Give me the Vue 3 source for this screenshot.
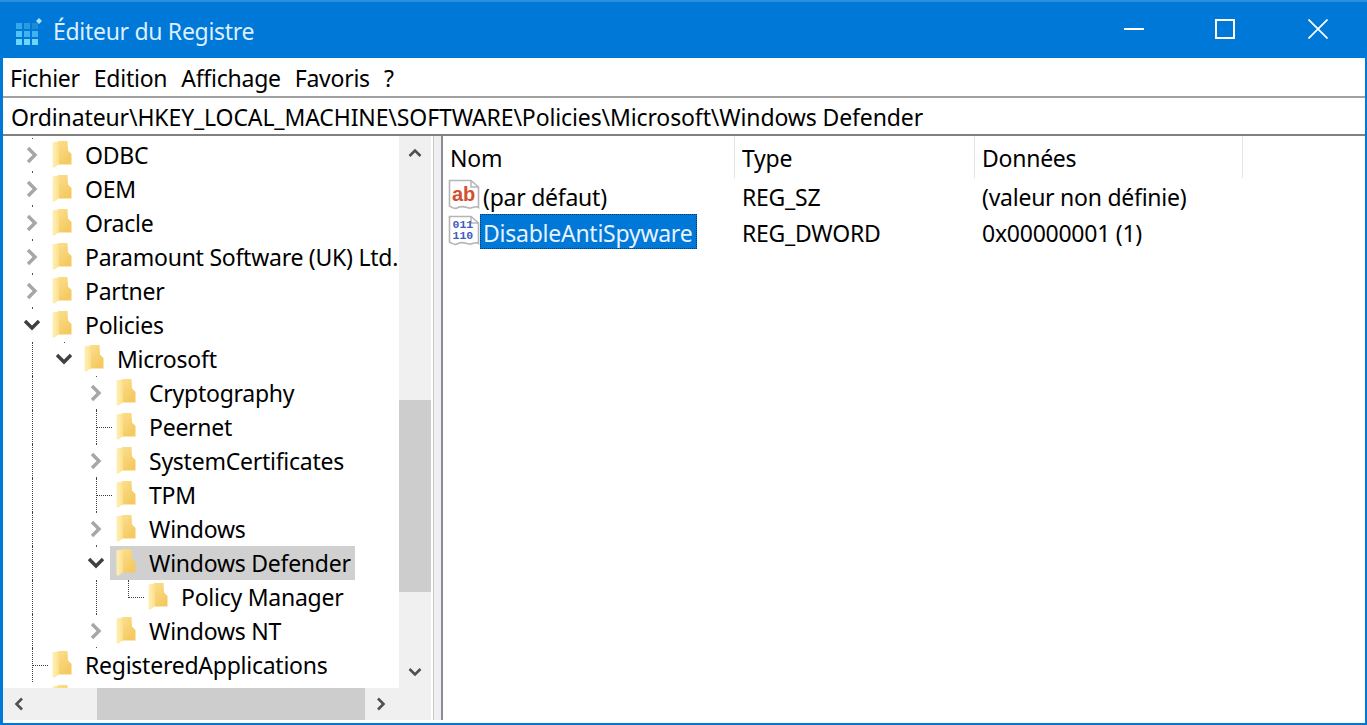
<template>
  <div class="window">
    <header class="titlebar">
      <svg class="app-icon" width="26" height="28" viewBox="0 0 26 28">
        <g fill="#4fc3f7">
          <rect x="0" y="5" width="6" height="6" fill="#35a9e8" />
          <rect x="8" y="5" width="6" height="6" fill="#2a9be0" />
          <rect x="16" y="5" width="6" height="6" fill="#1e8bd8" />
          <rect x="0" y="13" width="6" height="6" />
          <rect x="8" y="13" width="6" height="6" fill="#3db4ee" />
          <rect x="16" y="13" width="6" height="6" fill="#3db4ee" />
          <rect x="0" y="21" width="6" height="6" fill="#6fd6fb" />
          <rect x="8" y="21" width="6" height="6" fill="#6fd6fb" />
          <rect x="16" y="21" width="6" height="6" fill="#6fd6fb" />
        </g>
        <path d="M23 0 L26 3 L23 6 L20 3 Z" fill="#a6e3f9" />
      </svg>
      <span class="title">Éditeur du Registre</span>
      <div class="controls">
        <svg width="20" height="20" viewBox="0 0 20 20"><path d="M0 10H20" stroke="#fff" stroke-width="2" /></svg>
        <svg class="max" width="20" height="20" viewBox="0 0 20 20"><path d="M1 1H19V19H1Z" fill="none" stroke="#fff" stroke-width="2" /></svg>
        <svg width="20" height="20" viewBox="0 0 20 20"><path d="M0.5 0.5L19.5 19.5M19.5 0.5L0.5 19.5" stroke="#fff" stroke-width="1.7" /></svg>
      </div>
    </header>

    <div class="body">
      <nav class="menubar">
        <span v-for="m in menus" :key="m">{{ m }}</span>
      </nav>
      <div class="address">Ordinateur\HKEY_LOCAL_MACHINE\SOFTWARE\Policies\Microsoft\Windows Defender</div>

      <div class="panes">
        <section class="tree-pane">
          <div class="tree-main">
            <ul class="tree">
              <li v-for="(row, r) in rows" :key="r" class="row">
                <span v-for="(c, i) in row.cells" :key="i" class="cell" :class="c">
                  <svg v-if="c === 'closed'" width="12" height="18" viewBox="0 0 12 18"><path d="M2 2L9 9L2 16" fill="none" stroke="#a6a6a6" stroke-width="3.4" /></svg>
                  <svg v-if="c === 'open'" width="18" height="12" viewBox="0 0 18 12"><path d="M2 2L9 9L16 2" fill="none" stroke="#404040" stroke-width="3.4" /></svg>
                </span>
                <span class="item" :class="{ selected: row.selected }">
                  <svg class="folder" width="20" height="28" viewBox="0 0 20 28">
                    <defs>
                      <linearGradient id="fold" x1="0" y1="0" x2="0.6" y2="1">
                        <stop offset="0" stop-color="#fbdf8c" />
                        <stop offset="1" stop-color="#f5c860" />
                      </linearGradient>
                      <linearGradient id="leaf" x1="0" y1="0" x2="1" y2="0">
                        <stop offset="0" stop-color="#fff0b8" />
                        <stop offset="1" stop-color="#fbe08c" />
                      </linearGradient>
                    </defs>
                    <path d="M6 0H15.500L16 9.500L19.500 13V23.500H6Z" fill="url(#fold)" />
                    <path d="M0.500 1.500L7 0.500V23L2 27L0.500 25.500Z" fill="url(#leaf)" />
                  </svg>
                  <span class="label">{{ row.name }}</span>
                </span>
              </li>
            </ul>
            <div class="vscroll">
              <button class="arrow">
                <svg width="14" height="10" viewBox="0 0 14 10"><path d="M1.500 8L7 2.500L12.500 8" fill="none" stroke="#505050" stroke-width="2.600" /></svg>
              </button>
              <div class="vtrack"><div class="vthumb"></div></div>
              <button class="arrow">
                <svg width="14" height="10" viewBox="0 0 14 10"><path d="M1.500 2L7 7.500L12.500 2" fill="none" stroke="#505050" stroke-width="2.600" /></svg>
              </button>
            </div>
          </div>
          <div class="hscroll">
            <button class="arrow wide">
              <svg width="10" height="14" viewBox="0 0 10 14"><path d="M8 1.500L2.500 7L8 12.500" fill="none" stroke="#505050" stroke-width="2.600" /></svg>
            </button>
            <div class="hthumb"></div>
            <button class="arrow wide">
              <svg width="10" height="14" viewBox="0 0 10 14"><path d="M2 1.500L7.500 7L2 12.500" fill="none" stroke="#505050" stroke-width="2.600" /></svg>
            </button>
          </div>
        </section>

        <div class="splitter"></div>

        <section class="list-pane">
          <div class="list-head">
            <span class="col col-name">Nom</span>
            <span class="col col-type">Type</span>
            <span class="col col-data">Données</span>
          </div>
          <div class="list-row">
            <span class="col-name name-cell">
              <svg class="reg-icon" width="32" height="32" viewBox="0 0 32 32">
                <path d="M1.500 1.500H23L30.500 8V28.500C27 26 25 30 21 29C17 28 13 26 9 29C6 30.500 4 28 1.500 27Z" fill="#fff" stroke="#b5b5b5" stroke-width="1.600" />
                <path d="M23 1.500V8H30.500" fill="none" stroke="#b5b5b5" stroke-width="1.500" />
                <text x="4" y="22" class="ab">ab</text>
              </svg>
              <span class="value">(par défaut)</span>
            </span>
            <span class="col col-type">REG_SZ</span>
            <span class="col col-data">(valeur non définie)</span>
          </div>
          <div class="list-row">
            <span class="col-name name-cell">
              <svg class="reg-icon" width="32" height="32" viewBox="0 0 32 32">
                <path d="M1.500 1.500H23L30.500 8V28.500C27 26 25 30 21 29C17 28 13 26 9 29C6 30.500 4 28 1.500 27Z" fill="#fff" stroke="#b5b5b5" stroke-width="1.600" />
                <path d="M23 1.500V8H30.500" fill="none" stroke="#b5b5b5" stroke-width="1.500" />
                <text x="4.500" y="13" class="bin">011</text>
                <text x="4.500" y="24" class="bin">110</text>
              </svg>
              <span class="value active">DisableAntiSpyware</span>
            </span>
            <span class="col col-type">REG_DWORD</span>
            <span class="col col-data">0x00000001 (1)</span>
          </div>
        </section>
      </div>
    </div>
  </div>
</template>

<script setup>
const menus = ["Fichier", "Edition", "Affichage", "Favoris", "?"];

const rows = [
  { name: "ODBC", cells: ["closed"] },
  { name: "OEM", cells: ["closed"] },
  { name: "Oracle", cells: ["closed"] },
  { name: "Paramount Software (UK) Ltd.", cells: ["closed"] },
  { name: "Partner", cells: ["closed"] },
  { name: "Policies", cells: ["open"] },
  { name: "Microsoft", cells: ["pass", "open"] },
  { name: "Cryptography", cells: ["pass", "", "closed"] },
  { name: "Peernet", cells: ["pass", "", "tee"] },
  { name: "SystemCertificates", cells: ["pass", "", "closed"] },
  { name: "TPM", cells: ["pass", "", "tee"] },
  { name: "Windows", cells: ["pass", "", "closed"] },
  { name: "Windows Defender", cells: ["pass", "", "open"], selected: true },
  { name: "Policy Manager", cells: ["pass", "", "pass", "end"] },
  { name: "Windows NT", cells: ["pass", "", "closed"] },
  { name: "RegisteredApplications", cells: ["tee"] },
  { name: "", cells: [""] },
];
</script>

<style>
html,
body {
  margin: 0;
  overflow: hidden;
}
</style>

<style scoped>
.window {
  box-sizing: border-box;
  width: 1367px;
  height: 725px;
  background: #0078d7;
  border-top: 2px solid #2b8fdf;
  padding: 0 2px 2px 3px;
  display: flex;
  flex-direction: column;
  font-family: "Noto Sans", sans-serif;
  font-size: 23px;
  letter-spacing: -0.25px;
  color: #000;
}

.titlebar {
  height: 56px;
  flex: none;
  display: flex;
  align-items: center;
  color: #dcefff;
}

.app-icon {
  margin-left: 13px;
  margin-right: 11px;
  margin-top: 3px;
}

.title {
  font-size: 23px;
  letter-spacing: -0.3px;
  padding-top: 2px;
}

.controls {
  margin-left: auto;
  display: flex;
  gap: 71px;
  padding-right: 37px;
  margin-top: -2px;
}

.controls .max {
  margin-right: 2px;
}

.body {
  flex: 1;
  min-height: 0;
  background: #fff;
  display: flex;
  flex-direction: column;
}

.menubar {
  height: 40px;
  flex: none;
  display: flex;
  align-items: center;
  gap: 14px;
  padding: 2px 0 0 7px;
  border-bottom: 2px solid #a0a0a0;
  box-sizing: border-box;
}

.address {
  height: 38px;
  flex: none;
  box-sizing: border-box;
  border-bottom: 2px solid #808080;
  padding-left: 8px;
  line-height: 38px;
  letter-spacing: -0.12px;
  white-space: nowrap;
}

.panes {
  flex: 1;
  min-height: 0;
  display: flex;
  padding-bottom: 3px;
}

.tree-pane {
  width: 428px;
  flex: none;
  display: flex;
  flex-direction: column;
}

.tree-main {
  flex: 1;
  min-height: 0;
  display: flex;
}

.tree {
  list-style: none;
  margin: 0;
  padding: 2px 0 0 13px;
  width: 396px;
  box-sizing: border-box;
  overflow: hidden;
}

.row {
  height: 34px;
  display: flex;
  align-items: center;
  white-space: nowrap;
}

.cell {
  width: 32px;
  height: 34px;
  flex: none;
  position: relative;
  display: flex;
  align-items: center;
  justify-content: center;
}

.cell.pass::before,
.cell.tee::before,
.cell.end::before {
  content: "";
  position: absolute;
  left: 16px;
  top: 0;
  bottom: 0;
  border-left: 1px dotted #404040;
}

.cell.end::before {
  bottom: 16px;
}

.cell.tee::after,
.cell.end::after {
  content: "";
  position: absolute;
  left: 17px;
  right: 0;
  top: 17px;
  border-top: 1px dotted #404040;
}

/* single dots left between two expander arrows */
.cell.closed::before,
.cell.closed::after,
.cell.open::before {
  content: "";
  position: absolute;
  left: 16px;
  width: 1px;
  height: 1px;
  background: #505050;
}

.cell.closed::before,
.cell.open::before {
  top: 0;
}

.cell.closed::after {
  bottom: 0;
}

.item {
  height: 34px;
  display: flex;
  align-items: center;
  margin-left: -2px;
  padding-left: 6px;
  padding-right: 4px;
}

.item.selected {
  background: #d0d0d0;
}

.folder {
  flex: none;
  margin-right: 13px;
}

.vscroll {
  width: 32px;
  flex: none;
  background: #f0f0f0;
  display: flex;
  flex-direction: column;
}

.arrow {
  height: 33px;
  padding: 0;
  border: 0;
  background: #f0f0f0;
  display: flex;
  align-items: center;
  justify-content: center;
  flex: none;
}

.vtrack {
  flex: 1;
  padding-top: 231px;
}

.vthumb {
  height: 192px;
  background: #cdcdcd;
}

.hscroll {
  height: 32px;
  flex: none;
  background: #f0f0f0;
  display: flex;
  align-items: stretch;
}

.arrow.wide {
  width: 32px;
  height: auto;
}

.hthumb {
  width: 268px;
  margin-left: 62px;
  background: #cdcdcd;
}

.splitter {
  width: 12px;
  flex: none;
  box-sizing: border-box;
  background: #f0f0f0;
  border-left: 2px solid #fff;
  border-right: 2px solid #8c8c98;
  box-shadow: inset 1px 0 0 #c8c8c8;
}

.list-pane {
  flex: 1;
  min-width: 0;
  background: #fff;
}

.list-head {
  height: 41px;
  display: flex;
  align-items: flex-start;
}

.list-head .col {
  height: 42px;
  line-height: 44px;
  box-sizing: border-box;
  border-right: 1px solid #e5e5e5;
}

.col {
  padding-left: 7px;
  white-space: nowrap;
}

.col-name {
  width: 292px;
  flex: none;
  box-sizing: border-box;
}

.col-type {
  width: 240px;
  flex: none;
  box-sizing: border-box;
}

.col-data {
  width: 268px;
  flex: none;
  box-sizing: border-box;
}

.list-row {
  height: 36px;
  display: flex;
  align-items: center;
}

.list-row .col {
  padding-top: 3px;
}

.name-cell {
  display: flex;
  align-items: center;
  padding-left: 5px;
}

.reg-icon {
  flex: none;
}

.ab {
  font-family: "Liberation Sans", sans-serif;
  font-weight: 700;
  font-size: 20px;
  letter-spacing: 0;
  fill: #d2502e;
}

.bin {
  font-family: "Liberation Mono", monospace;
  font-weight: 700;
  font-size: 11.5px;
  letter-spacing: 0;
  fill: #3f5bc4;
}

.value {
  display: block;
  height: 35px;
  line-height: 39px;
  overflow: hidden;
  padding: 0 5px 0 3px;
}

.value.active {
  background: #0078d7;
  color: #e6f3ff;
  outline: 1px dotted #003c6c;
  outline-offset: -1px;
}
</style>
